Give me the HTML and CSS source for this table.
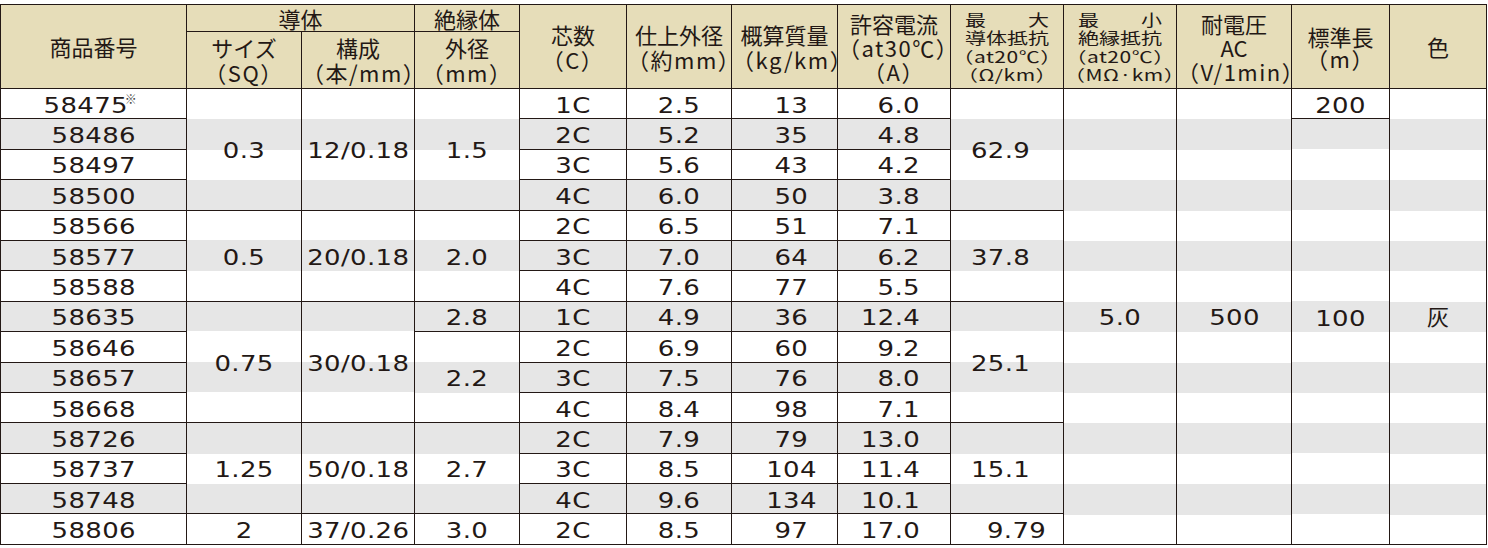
FILE: index.html
```html
<!DOCTYPE html>
<html lang="ja">
<head>
<meta charset="utf-8">
<title>ケーブル仕様表</title>
<link rel="stylesheet" href="styles.css">
</head>
<body>
<table class="spec">
  <colgroup>
    <col class="c-no"><col class="c-size"><col class="c-comp"><col class="c-ins">
    <col class="c-core"><col class="c-od"><col class="c-mass"><col class="c-amp">
    <col class="c-res"><col class="c-mres"><col class="c-volt"><col class="c-len"><col class="c-color">
  </colgroup>
  <thead>
    <tr class="hr1">
      <th rowspan="2">商品番号</th>
      <th colspan="2">導体</th>
      <th>絶縁体</th>
      <th rowspan="2"><div>芯数</div><div class="p">（C）</div></th>
      <th rowspan="2"><div>仕上外径</div><div class="p">（約mm）</div></th>
      <th rowspan="2"><div>概算質量</div><div class="p">（kg/km）</div></th>
      <th rowspan="2" class="three"><div>許容電流</div><div class="p">（at30℃）</div><div class="p">（A）</div></th>
      <th rowspan="2"><div class="stack"><div class="just"><span>最</span><span>大</span></div><div>導体抵抗</div><div class="p">（at20℃）</div><div class="p">（Ω/km）</div></div></th>
      <th rowspan="2"><div class="stack"><div class="just"><span>最</span><span>小</span></div><div>絶縁抵抗</div><div class="p">（at20℃）</div><div class="p">（MΩ·km）</div></div></th>
      <th rowspan="2" class="three"><div>耐電圧</div><div>AC</div><div class="p">（V/1min）</div></th>
      <th rowspan="2" class="tight"><div>標準長</div><div class="p">（m）</div></th>
      <th rowspan="2">色</th>
    </tr>
    <tr class="hr2">
      <th><div>サイズ</div><div class="p">（SQ）</div></th>
      <th><div>構成</div><div class="p">（本/mm）</div></th>
      <th><div>外径</div><div class="p">（mm）</div></th>
    </tr>
  </thead>
  <tbody>
    <tr>
      <td><span class="v">58475</span><sup class="note">※</sup></td>
      <td rowspan="4"><span class="v">0.3</span></td>
      <td rowspan="4"><span class="v">12/0.18</span></td>
      <td rowspan="4"><span class="v">1.5</span></td>
      <td><span class="v">1C</span></td>
      <td><span class="v">2.5</span></td>
      <td class="mass"><span class="v">13</span></td>
      <td class="amp"><span class="v">6.0</span></td>
      <td rowspan="4" class="res"><span class="v">62.9</span></td>
      <td rowspan="15"><span class="v">5.0</span></td>
      <td rowspan="15"><span class="v">500</span></td>
      <td><span class="v">200</span></td>
      <td rowspan="15" class="jp">灰</td>
    </tr>
    <tr>
      <td><span class="v">58486</span></td>
      <td><span class="v">2C</span></td>
      <td><span class="v">5.2</span></td>
      <td class="mass"><span class="v">35</span></td>
      <td class="amp"><span class="v">4.8</span></td>
      <td rowspan="14" class="len"><span class="v">100</span></td>
    </tr>
    <tr>
      <td><span class="v">58497</span></td>
      <td><span class="v">3C</span></td>
      <td><span class="v">5.6</span></td>
      <td class="mass"><span class="v">43</span></td>
      <td class="amp"><span class="v">4.2</span></td>
    </tr>
    <tr>
      <td><span class="v">58500</span></td>
      <td><span class="v">4C</span></td>
      <td><span class="v">6.0</span></td>
      <td class="mass"><span class="v">50</span></td>
      <td class="amp"><span class="v">3.8</span></td>
    </tr>
    <tr>
      <td><span class="v">58566</span></td>
      <td rowspan="3"><span class="v">0.5</span></td>
      <td rowspan="3"><span class="v">20/0.18</span></td>
      <td rowspan="3"><span class="v">2.0</span></td>
      <td><span class="v">2C</span></td>
      <td><span class="v">6.5</span></td>
      <td class="mass"><span class="v">51</span></td>
      <td class="amp"><span class="v">7.1</span></td>
      <td rowspan="3" class="res"><span class="v">37.8</span></td>
    </tr>
    <tr>
      <td><span class="v">58577</span></td>
      <td><span class="v">3C</span></td>
      <td><span class="v">7.0</span></td>
      <td class="mass"><span class="v">64</span></td>
      <td class="amp"><span class="v">6.2</span></td>
    </tr>
    <tr>
      <td><span class="v">58588</span></td>
      <td><span class="v">4C</span></td>
      <td><span class="v">7.6</span></td>
      <td class="mass"><span class="v">77</span></td>
      <td class="amp"><span class="v">5.5</span></td>
    </tr>
    <tr>
      <td><span class="v">58635</span></td>
      <td rowspan="4"><span class="v">0.75</span></td>
      <td rowspan="4"><span class="v">30/0.18</span></td>
      <td><span class="v">2.8</span></td>
      <td><span class="v">1C</span></td>
      <td><span class="v">4.9</span></td>
      <td class="mass"><span class="v">36</span></td>
      <td class="amp"><span class="v">12.4</span></td>
      <td rowspan="4" class="res"><span class="v">25.1</span></td>
    </tr>
    <tr>
      <td><span class="v">58646</span></td>
      <td rowspan="3"><span class="v">2.2</span></td>
      <td><span class="v">2C</span></td>
      <td><span class="v">6.9</span></td>
      <td class="mass"><span class="v">60</span></td>
      <td class="amp"><span class="v">9.2</span></td>
    </tr>
    <tr>
      <td><span class="v">58657</span></td>
      <td><span class="v">3C</span></td>
      <td><span class="v">7.5</span></td>
      <td class="mass"><span class="v">76</span></td>
      <td class="amp"><span class="v">8.0</span></td>
    </tr>
    <tr>
      <td><span class="v">58668</span></td>
      <td><span class="v">4C</span></td>
      <td><span class="v">8.4</span></td>
      <td class="mass"><span class="v">98</span></td>
      <td class="amp"><span class="v">7.1</span></td>
    </tr>
    <tr>
      <td><span class="v">58726</span></td>
      <td rowspan="3"><span class="v">1.25</span></td>
      <td rowspan="3"><span class="v">50/0.18</span></td>
      <td rowspan="3"><span class="v">2.7</span></td>
      <td><span class="v">2C</span></td>
      <td><span class="v">7.9</span></td>
      <td class="mass"><span class="v">79</span></td>
      <td class="amp"><span class="v">13.0</span></td>
      <td rowspan="3" class="res"><span class="v">15.1</span></td>
    </tr>
    <tr>
      <td><span class="v">58737</span></td>
      <td><span class="v">3C</span></td>
      <td><span class="v">8.5</span></td>
      <td class="mass"><span class="v">104</span></td>
      <td class="amp"><span class="v">11.4</span></td>
    </tr>
    <tr>
      <td><span class="v">58748</span></td>
      <td><span class="v">4C</span></td>
      <td><span class="v">9.6</span></td>
      <td class="mass"><span class="v">134</span></td>
      <td class="amp"><span class="v">10.1</span></td>
    </tr>
    <tr>
      <td><span class="v">58806</span></td>
      <td><span class="v">2</span></td>
      <td><span class="v">37/0.26</span></td>
      <td><span class="v">3.0</span></td>
      <td><span class="v">2C</span></td>
      <td><span class="v">8.5</span></td>
      <td class="mass"><span class="v">97</span></td>
      <td class="amp"><span class="v">17.0</span></td>
      <td class="res res-small"><span class="v">9.79</span></td>
    </tr>
  </tbody>
</table>
</body>
</html>
```

FILE: styles.css
```css
html, body {
  margin: 0;
  padding: 0;
  background: #ffffff;
}

.spec {
  border-collapse: collapse;
  table-layout: fixed;
  width: 1486px;
  margin: 4px 0 0 0;
  color: #231815;
}

.c-no { width: 186px; }
.c-size { width: 115px; }
.c-comp { width: 113px; }
.c-ins { width: 105px; }
.c-core { width: 107px; }
.c-od { width: 105px; }
.c-mass { width: 106px; }
.c-amp { width: 113px; }
.c-res { width: 113px; }
.c-mres { width: 113px; }
.c-volt { width: 115px; }
.c-len { width: 98px; }
.c-color { width: 97px; }

.spec th,
.spec td {
  border: 1px solid #231815;
  padding: 0;
  text-align: center;
  vertical-align: middle;
  overflow: visible;
}

/* header */
.spec th {
  background: #e6ddb9;
  font-family: "Noto Sans CJK JP", "Noto Sans", sans-serif;
  font-weight: 400;
  font-size: 22px;
  line-height: 25px;
  white-space: nowrap;
}

.hr1 { height: 27px; }
.hr2 { height: 57px; }

.spec th .p {
  letter-spacing: 1.5px;
}

.spec th.three {
  line-height: 24px;
}

.spec th.tight {
  line-height: 22px;
}

.stack {
  display: block;
  font-size: 21px;
  line-height: 25px;
  margin: -10px 0;
  transform: scaleY(0.74);
}

.spec th .stack .p {
  letter-spacing: 0.5px;
}

.just {
  display: flex;
  justify-content: space-between;
  width: 4em;
  margin: 0 auto;
}

/* body */
.spec tbody {
  background: repeating-linear-gradient(to bottom, #ffffff 0, #ffffff 30.4px, #e6e6e6 30.4px, #e6e6e6 60.8px);
}

.spec tbody tr {
  height: 30.4px;
}

.spec td {
  font-family: "DejaVu Sans", "Noto Sans CJK JP", sans-serif;
  font-size: 22px;
  line-height: 24px;
  padding-top: 4px;
  white-space: nowrap;
}

.v {
  display: inline-block;
  transform: scaleX(1.18);
  letter-spacing: 0.3px;
}

.note {
  font-family: "Noto Sans CJK JP", sans-serif;
  font-size: 12px;
  line-height: 0;
  vertical-align: 9px;
  color: #444;
  margin-left: 3px;
}

.jp {
  font-family: "Noto Sans CJK JP", sans-serif;
}

.spec td.mass {
  padding-left: 14px;
}

.spec td.amp {
  text-align: right;
  padding-right: 30px;
}
.spec td.amp .v {
  transform-origin: right center;
}

.spec td.res {
  text-align: left;
  padding-left: 20px;
}
.spec td.res .v {
  transform-origin: left center;
}
.spec td.res-small {
  padding-left: 36px;
}

.spec td.len {
  padding-bottom: 29px;
}
```
